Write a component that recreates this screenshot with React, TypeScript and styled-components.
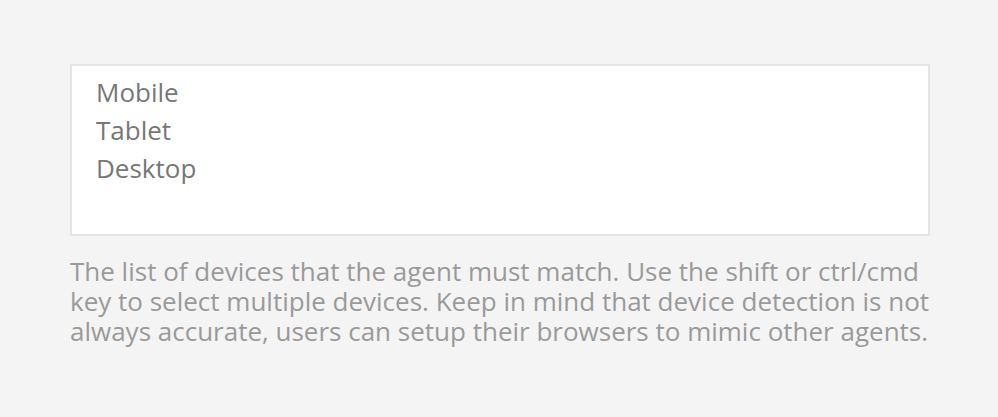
import React from 'react';
import styled, { createGlobalStyle } from 'styled-components';

const GlobalStyle = createGlobalStyle`
    html, body {
        margin: 0;
        padding: 0;
        background-color: #f4f4f4;
    }
    body {
        font-family: "Open Sans", "Liberation Sans", sans-serif;
    }
`;

const Page = styled.div`
    width: 998px;
    height: 417px;
    box-sizing: border-box;
    padding: 64px 68px 0 70px;
`;

const Field = styled.div`
    display: flex;
    flex-direction: column;
    gap: 20px;
    width: 860px;
`;

const DeviceSelect = styled.select`
    display: block;
    width: 860px;
    height: 172px;
    box-sizing: border-box;
    margin: 0;
    padding: 8px 24px;
    border: 2px solid #e5e5e5;
    border-radius: 0;
    background-color: #fff;
    color: #777;
    font-family: "Open Sans", "Liberation Sans", sans-serif;
    font-size: 26px;
    outline: none;
    overflow: hidden;

    option {
        padding: 0;
        line-height: 38px;
        min-height: 38px;
        color: #777;
    }
`;

const HelpText = styled.p`
    margin: 0;
    color: #9a9a9a;
    font-size: 26px;
    line-height: 30px;
`;

const devices = ['Mobile', 'Tablet', 'Desktop'];

function App() {
    return (
        <>
            <GlobalStyle />
            <Page>
                <Field>
                    <DeviceSelect multiple>
                        {devices.map(d => (
                            <option key={d} value={d.toLowerCase()}>{d}</option>
                        ))}
                    </DeviceSelect>
                    <HelpText>
                        The list of devices that the agent must match. Use the shift or ctrl/cmd
                        key to select multiple devices. Keep in mind that device detection is not
                        always accurate, users can setup their browsers to mimic other agents.
                    </HelpText>
                </Field>
            </Page>
        </>
    );
}

export default App;
